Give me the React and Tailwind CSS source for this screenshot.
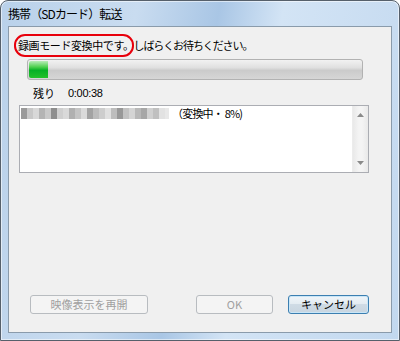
import React from 'react';

const jp = "font-['Meiryo_UI','Noto_Sans_CJK_JP',sans-serif]";

// pixelated (mosaic) file name shades
const mosaic = [
  '#9a9a9a', '#c8c8c8', '#d8d8d8', '#b4b4b4', '#c9c9c9', '#8e8e8e', '#cfcfcf', '#d9d9d9',
  '#b0b0b0', '#c4c4c4', '#dadada', '#a3a3a3', '#bcbcbc', '#cdcdcd', '#e0e0e0', '#bdbdbd',
  '#989898', '#c2c2c2', '#d4d4d4', '#b8b8b8', '#a7a7a7', '#d0d0d0', '#c0c0c0', '#e2e2e2',
];

function Button({ children, disabled, className }) {
  return (
    <button
      type="button"
      disabled={disabled}
      className={
        disabled
          ? `h-[19px] rounded-[3px] border border-[#b8bcc0] bg-[#f4f4f4] text-[11px] text-[#a0a0a0] leading-none ${jp} ${className}`
          : `h-[19px] rounded-[3px] border border-[#3c7fb1] bg-[linear-gradient(#f0f5f9_0%,#e4ecf2_45%,#cfdbe5_50%,#c8d5e0_100%)] shadow-[inset_0_0_0_1px_#c9e6f7] text-[11px] text-black leading-none ${jp} ${className}`
      }
    >
      {children}
    </button>
  );
}

export default function App() {
  return (
    <div className="w-[400px] h-[341px] bg-white">
      <div className="w-full h-full flex flex-col rounded-t-[8px] border border-[#56606b] bg-[linear-gradient(100deg,#b9d1ea_0%,#c9dcf0_30%,#a9c6e5_48%,#d3e4f5_62%,#c2d8ef_100%)] px-[7px] pb-[7px] shadow-[inset_0_0_0_1px_rgba(255,255,255,0.55)]">
        {/* Title */}
        <div className={`h-[25px] flex items-center text-[12px] tracking-[-0.9px] text-black ${jp}`}>
          携帯（SDカード）転送
        </div>

        {/* Client area */}
        <div className="flex-1 flex flex-col border border-[#8a9bab] bg-[#f0f0f0]">
          <div className={`mt-[10px] ml-[9px] h-[16px] flex items-center text-[11px] tracking-[-1.1px] text-black ${jp}`}>
            <span className="relative tracking-[-0.4px]">
              録画モード変換中です。
              <span className="absolute -left-[4px] right-[0px] -top-[3px] -bottom-[4px] rounded-[11px] border-[2.5px] border-[#e8000b]" />
            </span>
            <span>しばらくお待ちください。</span>
          </div>

          {/* Progress bar */}
          <div className="mt-[6px] ml-[18px] w-[336px] h-[21px] rounded-[3px] border border-[#b2b2b2] bg-[linear-gradient(#f2f2f2_0%,#e0e0e0_40%,#cbcbcb_55%,#d6d6d6_100%)] p-[1px]">
            <div className="w-[19px] h-full rounded-l-[2px] bg-[linear-gradient(#b9ecb9_0%,#4ed04e_35%,#06b025_55%,#22c22a_100%)]" />
          </div>

          <div className={`mt-[6px] ml-[24px] h-[14px] flex items-center gap-[13px] text-[11px] text-black ${jp}`}>
            <span>残り</span>
            <span className="font-['Liberation_Sans',sans-serif] tracking-[-0.3px]">0:00:38</span>
          </div>

          {/* List box */}
          <div className="mt-[5px] ml-[10px] w-[350px] h-[68px] flex border border-[#abadb3] bg-white">
            <div className="flex-1 pt-[1px] pl-[1px]">
              <div className="flex items-center h-[12px]">
                <div className="flex h-[11px]">
                  {mosaic.map((c, i) => (
                    <div key={i} className="w-[6px] h-full" style={{ backgroundColor: c }} />
                  ))}
                  <div className="w-[4px] h-full bg-[#e8e8e8]" />
                </div>
                <span className={`ml-[3px] text-[11px] tracking-[-0.8px] text-black ${jp}`}>（変換中・ 8%)</span>
              </div>
            </div>
            <div className="w-[16px] h-full flex flex-col items-center justify-between py-[7px] bg-[linear-gradient(90deg,#e9e9e9,#f4f4f4_40%,#f4f4f4_60%,#e9e9e9)] border-l border-[#ececec]">
              <svg width="7" height="4" viewBox="0 0 7 4"><path d="M0 4 L3.5 0 L7 4 Z" fill="#8a8a8a" /></svg>
              <svg width="7" height="4" viewBox="0 0 7 4"><path d="M0 0 L7 0 L3.5 4 Z" fill="#8a8a8a" /></svg>
            </div>
          </div>

          {/* Buttons */}
          <div className="mt-auto mb-[18px] ml-[21px] flex items-center">
            <Button disabled className="w-[118px]">映像表示を再開</Button>
            <Button disabled className="ml-[48px] w-[77px] font-['Liberation_Sans',sans-serif]">OK</Button>
            <Button className="ml-[15px] w-[81px]">キャンセル</Button>
          </div>
        </div>
      </div>
    </div>
  );
}
